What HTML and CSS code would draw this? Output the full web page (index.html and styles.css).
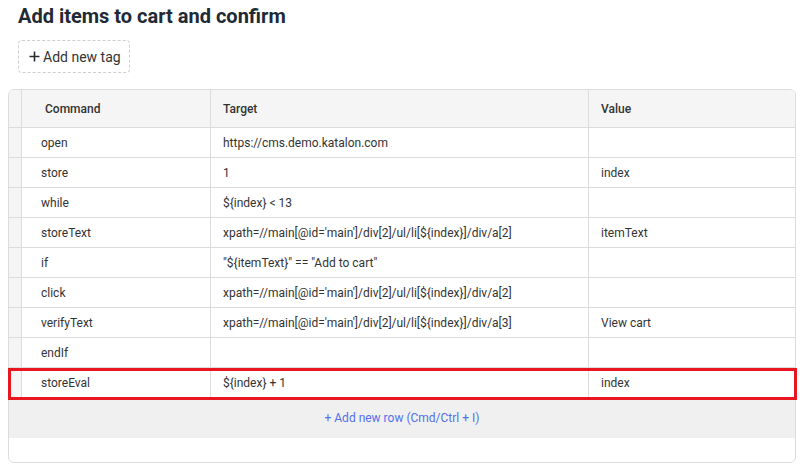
FILE: index.html
```html
<!DOCTYPE html>
<html>
<head>
<meta charset="utf-8">
<link rel="stylesheet" href="styles.css">
</head>
<body>
<div class="page">
  <h1 class="title">Add items to cart and confirm</h1>
  <button class="tag-btn"><svg class="plus" width="11" height="11" viewBox="0 0 11 11"><path d="M5.5 0.5v10M0.5 5.5h10" stroke="#2b2b2b" stroke-width="1.6" fill="none"/></svg>Add new tag</button>
  <div class="grid">
    <div class="row head">
      <div class="gut"></div>
      <div class="cell cmd">Command</div>
      <div class="cell">Target</div>
      <div class="cell">Value</div>
    </div>
    <div class="row"><div class="gut"></div><div class="cell cmd">open</div><div class="cell">https://cms.demo.katalon.com</div><div class="cell"></div></div>
    <div class="row"><div class="gut"></div><div class="cell cmd">store</div><div class="cell">1</div><div class="cell">index</div></div>
    <div class="row"><div class="gut"></div><div class="cell cmd">while</div><div class="cell">${index} &lt; 13</div><div class="cell"></div></div>
    <div class="row"><div class="gut"></div><div class="cell cmd">storeText</div><div class="cell">xpath=//main[@id='main']/div[2]/ul/li[${index}]/div/a[2]</div><div class="cell">itemText</div></div>
    <div class="row"><div class="gut"></div><div class="cell cmd">if</div><div class="cell">"${itemText}" == "Add to cart"</div><div class="cell"></div></div>
    <div class="row"><div class="gut"></div><div class="cell cmd">click</div><div class="cell">xpath=//main[@id='main']/div[2]/ul/li[${index}]/div/a[2]</div><div class="cell"></div></div>
    <div class="row"><div class="gut"></div><div class="cell cmd">verifyText</div><div class="cell">xpath=//main[@id='main']/div[2]/ul/li[${index}]/div/a[3]</div><div class="cell">View cart</div></div>
    <div class="row"><div class="gut"></div><div class="cell cmd">endIf</div><div class="cell"></div><div class="cell"></div></div>
    <div class="row selected"><div class="gut"></div><div class="cell cmd">storeEval</div><div class="cell">${index} + 1</div><div class="cell">index</div></div>
    <div class="add-row">+ Add new row (Cmd/Ctrl + I)</div>
  </div>
</div>
</body>
</html>
```

FILE: styles.css
```css
html, body {
  margin: 0;
  padding: 0;
  background: #ffffff;
}
.page {
  padding: 4px 9px 0 8px;
  font-family: Roboto, "Liberation Sans", sans-serif;
  color: #333333;
}
.title {
  margin: 0 0 0 10px;
  font-size: 20px;
  line-height: 24px;
  font-weight: 700;
  color: #1e2a35;
}
.tag-btn {
  margin: 12px 0 0 10px;
  height: 33px;
  width: 112px;
  padding: 0 0 0 10px;
  display: flex;
  align-items: center;
  gap: 3px;
  background: #ffffff;
  border: 1px dashed #cfcfcf;
  border-radius: 4px;
  font-family: Roboto, "Liberation Sans", sans-serif;
  font-size: 14px;
  color: #333333;
}
.plus {
  display: block;
}
.grid {
  margin-top: 16px;
  border: 1px solid #dcdcdc;
  border-radius: 6px;
  height: 372px;
}
.row {
  display: grid;
  grid-template-columns: 13px 189px 378px 1fr;
  height: 29px;
  border-bottom: 1px solid #dcdcdc;
  font-size: 12px;
}
.row.head {
  height: 37px;
  background: #f5f5f5;
  font-weight: 500;
  color: #2d2d2d;
  border-radius: 5px 5px 0 0;
}
.gut {
  background: #f5f5f5;
  border-right: 1px solid #dcdcdc;
}
.head .gut {
  border-top-left-radius: 5px;
}
.cell {
  display: flex;
  align-items: center;
  padding-left: 12px;
  border-right: 1px solid #dcdcdc;
  white-space: nowrap;
  color: #333333;
}
.cell:last-child {
  border-right: none;
}
.cell.cmd {
  padding-left: 19px;
}
.head .cell.cmd {
  padding-left: 23px;
}
.row.selected {
  position: relative;
}
.row.selected::after {
  content: "";
  position: absolute;
  top: 0;
  left: -1px;
  right: -2px;
  bottom: -3px;
  border: 3px solid #e8161f;
  pointer-events: none;
}
.add-row {
  height: 40px;
  display: flex;
  align-items: center;
  justify-content: center;
  background: #eff0ef;
  color: #5470ee;
  font-size: 12px;
}
```
